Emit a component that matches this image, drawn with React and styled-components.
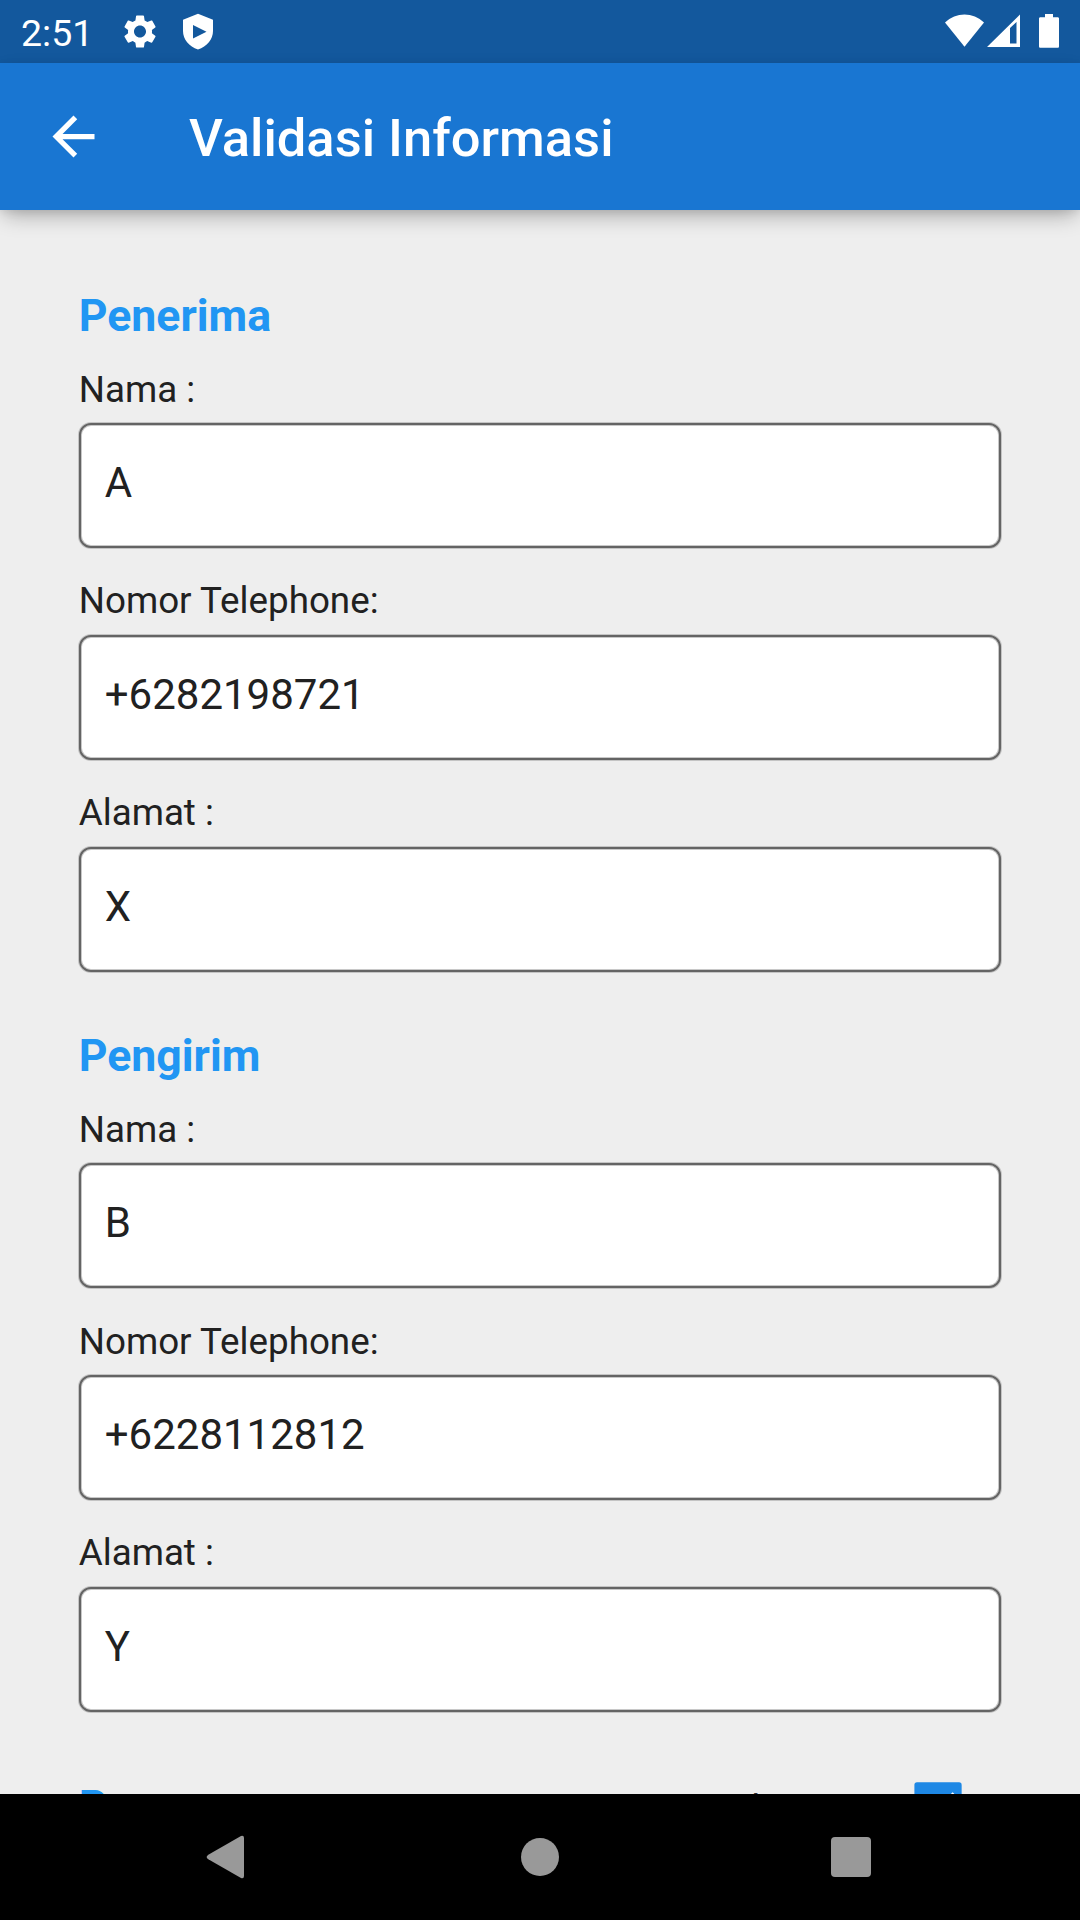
import React from "react";
import styled, { createGlobalStyle } from "styled-components";

const GlobalStyle = createGlobalStyle`
  * { box-sizing: border-box; }
  html, body { margin: 0; padding: 0; background: #eeeeee; }
  body { font-family: Roboto, "Liberation Sans", sans-serif; overflow: hidden; }
`;

const Screen = styled.div`
  width: 1080px;
  height: 1920px;
  display: flex;
  flex-direction: column;
  background: #eeeeee;
  overflow: hidden;
`;

const StatusBar = styled.header`
  flex: none;
  height: 63px;
  padding: 0 21px;
  display: flex;
  justify-content: space-between;
  background: #13589d;
  color: #fff;
`;

const StatusSide = styled.div`
  display: flex;
  align-items: flex-start;
`;

const Clock = styled.span`
  width: 98px;
  margin-top: 11px;
  font-size: 37.5px;
  line-height: 45px;
`;

const StatusIcon = styled.svg`
  flex: none;
  display: block;
  width: ${(p) => p.$w}px;
  height: 63px;
  margin-left: ${(p) => p.$gap || 0}px;
`;

const AppBar = styled.div`
  flex: none;
  height: 147px;
  display: flex;
  align-items: center;
  background: #1976d2;
  color: #fff;
  box-shadow: 0 9px 20px -4px rgba(0, 0, 0, 0.3), 0 2px 8px 0 rgba(0, 0, 0, 0.07);
  z-index: 1;
`;

const BackButton = styled.button`
  width: 147px;
  height: 147px;
  padding: 0;
  border: 0;
  background: none;
  color: inherit;
  display: grid;
  place-items: center;
`;

const Title = styled.h1`
  margin: 2px 0 0 42px;
  font-size: 52.5px;
  line-height: 62px;
  font-weight: 500;
`;

const Content = styled.main`
  flex: 1;
  min-height: 0;
  padding: 80px 78.75px 0;
  overflow: hidden;
`;

const Section = styled.section`
  height: 740px;
`;

const SectionTitle = styled.h2`
  margin: 0;
  height: 73px;
  font-size: 44.625px;
  line-height: 52px;
  font-weight: 700;
  color: #2196f3;
`;

const Field = styled.label`
  display: flex;
  flex-direction: column;
  height: 212px;
`;

const FieldLabel = styled.span`
  height: 60px;
  padding-top: ${(p) => p.$drop}px;
  font-size: 36.75px;
  line-height: 52px;
  color: #212121;
`;

const FieldBox = styled.output`
  height: 125px;
  padding: 33px 24px 0;
  font-size: 42px;
  line-height: 50px;
  color: #212121;
  background: #fff;
  border: 2px solid #646464;
  border-radius: 12px;
  box-shadow: 0 0 0 1px #c4c4c4, inset 0 0 0 1px #c8c8c8;
`;

const CheckRow = styled.div`
  display: flex;
  align-items: flex-start;
  justify-content: space-between;
  padding: 11px 39px 0 0;
`;

const CheckGroup = styled.div`
  display: flex;
  align-items: flex-start;
`;

const CheckLabel = styled.span`
  margin-top: 2px;
  width: 163px;
  font-size: 36.75px;
  line-height: 52px;
  color: #212121;
`;

const CheckBox = styled.svg`
  display: block;
  width: 48px;
  height: 48px;
  margin-top: 1px;
`;

const NavBar = styled.nav`
  flex: none;
  height: 126px;
  background: #000;
  display: flex;
  justify-content: center;
  align-items: center;
  gap: 247px;
`;

const NavIcon = styled.svg`
  width: 64px;
  height: 64px;
  fill: #999;
`;

const people = [
  {
    title: "Penerima",
    fields: [
      { label: "Nama :", value: "A", drop: 1 },
      { label: "Nomor Telephone:", value: "+6282198721", drop: 0 },
      { label: "Alamat :", value: "X", drop: 0 },
    ],
  },
  {
    title: "Pengirim",
    fields: [
      { label: "Nama :", value: "B", drop: 1 },
      { label: "Nomor Telephone:", value: "+6228112812", drop: 1 },
      { label: "Alamat :", value: "Y", drop: 0 },
    ],
  },
];

export default function App() {
  return (
    <>
      <GlobalStyle />
      <Screen>
        <StatusBar>
          <StatusSide>
            <Clock>2:51</Clock>
            <StatusIcon $w={42} viewBox="0 0 42 63">
              <g transform="translate(1 11.6) scale(1.667)">
                <path
                  fill="#fff"
                  d="M19.14 12.94c.04-.3.06-.61.06-.94 0-.32-.02-.64-.07-.94l2.03-1.58c.18-.14.23-.41.12-.61l-1.92-3.32c-.12-.22-.37-.29-.59-.22l-2.39.96c-.5-.38-1.03-.7-1.62-.94l-.36-2.54c-.04-.24-.24-.41-.48-.41h-3.84c-.24 0-.43.17-.47.41l-.36 2.54c-.59.24-1.13.57-1.62.94l-2.39-.96c-.22-.08-.47 0-.59.22L2.74 8.87c-.12.21-.08.47.12.61l2.03 1.58c-.05.3-.09.63-.09.94s.02.64.07.94l-2.03 1.58c-.18.14-.23.41-.12.61l1.92 3.32c.12.22.37.29.59.22l2.39-.96c.5.38 1.03.7 1.62.94l.36 2.54c.05.24.24.41.48.41h3.84c.24 0 .44-.17.47-.41l.36-2.54c.59-.24 1.13-.56 1.62-.94l2.39.96c.22.08.47 0 .59-.22l1.92-3.32c.12-.22.07-.47-.12-.61l-2.01-1.58zM12 15.6c-1.98 0-3.6-1.62-3.6-3.6s1.62-3.6 3.6-3.6 3.6 1.62 3.6 3.6-1.62 3.6-3.6 3.6z"
                />
              </g>
            </StatusIcon>
            <StatusIcon $w={32} $gap={21} viewBox="0 0 32 63">
              <path
                fill="#fff"
                fillRule="evenodd"
                d="M16 13.8 31 19.7V31c0 8.5-6 15.5-15 18.6C7 46.5 1 39.5 1 31V19.7ZM11 25v13.5L24.5 31.7Z"
              />
            </StatusIcon>
          </StatusSide>
          <StatusSide>
            <StatusIcon $w={39} viewBox="0 0 39 63">
              <path fill="#fff" d="M19.5 46.7 0 22.5C11 11.7 28 11.7 39 22.5Z" />
            </StatusIcon>
            <StatusIcon $w={33} $gap={3} viewBox="0 0 33 63">
              <path fill="#fff" fillRule="evenodd" d="M0 47 33 14.5V47ZM23 28V43.5H29.5V22Z" />
            </StatusIcon>
            <StatusIcon $w={20} $gap={19} viewBox="0 0 20 63">
              <path
                fill="#fff"
                d="M6 14h8v3.3h4.5c1 0 1.5.5 1.5 1.5v27.5c0 1-.5 1.5-1.5 1.5h-17c-1 0-1.5-.5-1.5-1.5V18.8c0-1 .5-1.5 1.5-1.5H6Z"
              />
            </StatusIcon>
          </StatusSide>
        </StatusBar>
        <AppBar>
          <BackButton aria-label="Kembali">
            <svg width="63" height="63" viewBox="0 0 24 24" fill="#fff">
              <path d="M20 11H7.83l5.59-5.59L12 4l-8 8 8 8 1.41-1.41L7.83 13H20v-2z" />
            </svg>
          </BackButton>
          <Title>Validasi Informasi</Title>
        </AppBar>
        <Content>
          {people.map((person) => (
            <Section key={person.title}>
              <SectionTitle>{person.title}</SectionTitle>
              {person.fields.map((field) => (
                <Field key={field.label}>
                  <FieldLabel $drop={field.drop}>{field.label}</FieldLabel>
                  <FieldBox>{field.value}</FieldBox>
                </Field>
              ))}
            </Section>
          ))}
          <CheckRow>
            <SectionTitle>P</SectionTitle>
            <CheckGroup>
              <CheckLabel>l</CheckLabel>
              <CheckBox viewBox="0 0 48 48">
                <rect x="0.4" y="0.3" width="47.25" height="47.25" rx="2.6" fill="#1e88e5" />
                <path d="M7.5 21.5 19.3 33.3 40.5 12.1" fill="none" stroke="#fff" strokeWidth="5.25" />
              </CheckBox>
            </CheckGroup>
          </CheckRow>
        </Content>
        <NavBar>
          <NavIcon viewBox="0 0 64 64">
            <path d="M11.3 29.7 44 11Q47 10 47 13V51Q47 54 44 53L11.3 34.3Q8 32 11.3 29.7Z" />
          </NavIcon>
          <NavIcon viewBox="0 0 64 64">
            <circle cx="32" cy="32" r="19" />
          </NavIcon>
          <NavIcon viewBox="0 0 64 64">
            <rect x="12" y="12" width="40" height="40" rx="4" />
          </NavIcon>
        </NavBar>
      </Screen>
    </>
  );
}
